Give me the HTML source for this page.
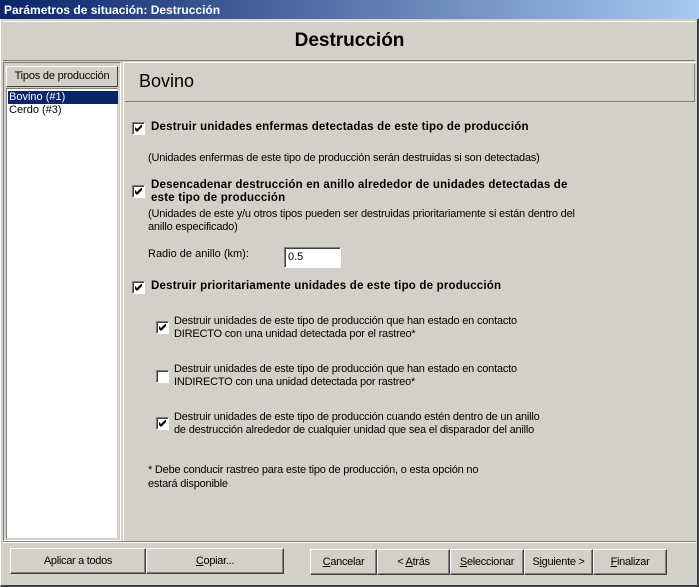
<!DOCTYPE html>
<html><head><style>
*{margin:0;padding:0;box-sizing:border-box}
html,body{width:699px;height:587px;overflow:hidden}
body{background:#d4d0c8;font-family:"Liberation Sans",sans-serif;font-size:11px;position:relative;color:#000}
.a{position:absolute;white-space:nowrap}
.title{left:0;top:0;width:699px;height:19px;background:linear-gradient(90deg,#0a246a,#a6caf0);color:#fff;font-weight:bold;font-size:12px;padding:3px 0 0 4px}
.cb{position:absolute;width:13px;height:13px;background:#fff;border:1px solid;border-color:#808080 #fff #fff #808080;box-shadow:inset 1px 1px 0 #404040}
.cb svg{position:absolute;left:2px;top:2px}
.bt{position:absolute;height:26px;border:1px solid;border-color:#fff #404040 #404040 #fff;box-shadow:inset -1px -1px 0 #808080;text-align:center;line-height:24px;font-size:11px;white-space:nowrap;letter-spacing:-0.3px}
.b{font-weight:bold;font-size:11.5px;letter-spacing:0.2px}
.t{letter-spacing:-0.2px}
</style></head><body>
<div class="a title">Parámetros de situación: Destrucción</div>
<div class="a" style="left:0;top:19px;width:699px;height:568px;border-right:2px solid #404040;border-left:1px solid #fff;border-bottom:2px solid #404040"></div>
<div class="a" style="left:3px;top:21px;width:692px;height:40px;border-top:1px solid #fff;border-bottom:1px solid #808080"></div>
<div class="a" style="left:0;top:30px;width:699px;text-align:center;font-weight:bold;font-size:19px">Destrucción</div>
<div class="a" style="left:3px;top:62px;width:118px;height:479px;border:1px solid;border-color:#808080 #fff #fff #808080"></div>
<div class="a t" style="left:6px;top:66px;width:112px;height:21px;border:1px solid;border-color:#fff #404040 #404040 #fff;text-align:center;line-height:19px">Tipos de producción</div>
<div class="a" style="left:6px;top:88px;width:112px;height:451px;background:#fff;border:1px solid;border-color:#808080 #d4d0c8 #d4d0c8 #808080"></div>
<div class="a" style="left:8px;top:91px;width:110px;height:13px;background:#0a246a;color:#fff;padding-left:1px;font-size:11px;line-height:13px">Bovino (#1)</div>
<div class="a" style="left:9px;top:104px;font-size:11px;line-height:13px">Cerdo (#3)</div>
<div class="a" style="left:123px;top:62px;width:573px;height:479px;border-left:1px solid #fff;border-top:1px solid #fff"></div>
<div class="a" style="left:125px;top:64px;width:570px;height:38px;border-bottom:1px solid #808080;border-right:1px solid #808080"></div>
<div class="a" style="left:139px;top:71px;font-size:18px">Bovino</div>
<div class="cb" style="left:132px;top:122px"><svg width="7" height="7"><path d="M0 2l2 2 5-5v3l-5 5-2-2z" fill="#000"/></svg></div>
<div class="a b" style="left:151px;top:121px">Destruir unidades enfermas detectadas de este tipo de producción</div>
<div class="a t" style="left:148px;top:152px">(Unidades enfermas de este tipo de producción serán destruidas si son detectadas)</div>
<div class="cb" style="left:132px;top:185px"><svg width="7" height="7"><path d="M0 2l2 2 5-5v3l-5 5-2-2z" fill="#000"/></svg></div>
<div class="a b" style="left:151px;top:179px;line-height:13px">Desencadenar destrucción en anillo alrededor de unidades detectadas de<br>este tipo de producción</div>
<div class="a t" style="left:148px;top:208px;line-height:13px">(Unidades de este y/u otros tipos pueden ser destruidas prioritariamente si están dentro del<br>anillo especificado)</div>
<div class="a" style="left:148px;top:248px">Radio de anillo (km):</div>
<div class="a" style="left:284px;top:247px;width:57px;height:21px;background:#fff;border:1px solid;border-color:#808080 #fff #fff #808080;box-shadow:inset 1px 1px 0 #404040;padding:3px 0 0 3px">0.5</div>
<div class="cb" style="left:132px;top:281px"><svg width="7" height="7"><path d="M0 2l2 2 5-5v3l-5 5-2-2z" fill="#000"/></svg></div>
<div class="a b" style="left:151px;top:280px">Destruir prioritariamente unidades de este tipo de producción</div>
<div class="cb" style="left:156px;top:321px"><svg width="7" height="7"><path d="M0 2l2 2 5-5v3l-5 5-2-2z" fill="#000"/></svg></div>
<div class="a t" style="left:174px;top:315px;line-height:13px">Destruir unidades de este tipo de producción que han estado en contacto<br>DIRECTO con una unidad detectada por el rastreo*</div>
<div class="cb" style="left:156px;top:370px"></div>
<div class="a t" style="left:174px;top:363px;line-height:13px">Destruir unidades de este tipo de producción que han estado en contacto<br>INDIRECTO con una unidad detectada por rastreo*</div>
<div class="cb" style="left:156px;top:417px"><svg width="7" height="7"><path d="M0 2l2 2 5-5v3l-5 5-2-2z" fill="#000"/></svg></div>
<div class="a t" style="left:174px;top:411px;line-height:13px">Destruir unidades de este tipo de producción cuando estén dentro de un anillo<br>de destrucción alrededor de cualquier unidad que sea el disparador del anillo</div>
<div class="a t" style="left:148px;top:463px;line-height:14px">* Debe conducir rastreo para este tipo de producción, o esta opción no<br>estará disponible</div>
<div class="a" style="left:3px;top:541px;width:693px;border-top:1px solid #808080;border-bottom:1px solid #fff;height:2px"></div>
<div class="bt" style="left:10px;top:548px;width:136px">Aplicar a todos</div>
<div class="bt" style="left:146px;top:548px;width:138px"><u>C</u>opiar...</div>
<div class="bt" style="left:310px;top:549px;width:67px"><u>C</u>ancelar</div>
<div class="bt" style="left:377px;top:549px;width:73px">&lt; <u>A</u>trás</div>
<div class="bt" style="left:450px;top:549px;width:74px"><u>S</u>eleccionar</div>
<div class="bt" style="left:524px;top:549px;width:69px">S<u>i</u>guiente &gt;</div>
<div class="bt" style="left:593px;top:549px;width:74px"><u>F</u>inalizar</div>
</body></html>
